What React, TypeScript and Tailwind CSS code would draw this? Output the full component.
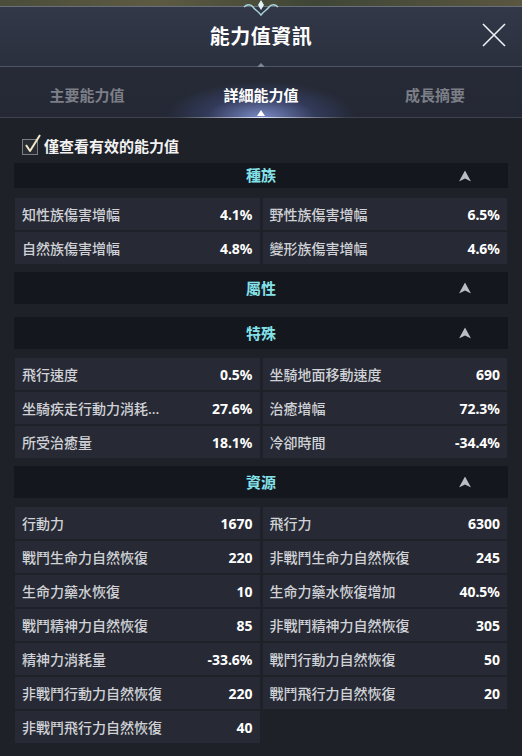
type Cell = { label: string; value: string };

// Stat sections shown in the detail tab
const sections: { title: string; bar: string; cells: Cell[] }[] = [
  {
    title: "種族",
    bar: "h-[25px]",
    cells: [
      { label: "知性族傷害增幅", value: "4.1%" },
      { label: "野性族傷害增幅", value: "6.5%" },
      { label: "自然族傷害增幅", value: "4.8%" },
      { label: "變形族傷害增幅", value: "4.6%" },
    ],
  },
  { title: "屬性", bar: "h-[32px]", cells: [] },
  {
    title: "特殊",
    bar: "h-[32px]",
    cells: [
      { label: "飛行速度", value: "0.5%" },
      { label: "坐騎地面移動速度", value: "690" },
      { label: "坐騎疾走行動力消耗...", value: "27.6%" },
      { label: "治癒增幅", value: "72.3%" },
      { label: "所受治癒量", value: "18.1%" },
      { label: "冷卻時間", value: "-34.4%" },
    ],
  },
  {
    title: "資源",
    bar: "h-[32px]",
    cells: [
      { label: "行動力", value: "1670" },
      { label: "飛行力", value: "6300" },
      { label: "戰鬥生命力自然恢復", value: "220" },
      { label: "非戰鬥生命力自然恢復", value: "245" },
      { label: "生命力藥水恢復", value: "10" },
      { label: "生命力藥水恢復增加", value: "40.5%" },
      { label: "戰鬥精神力自然恢復", value: "85" },
      { label: "非戰鬥精神力自然恢復", value: "305" },
      { label: "精神力消耗量", value: "-33.6%" },
      { label: "戰鬥行動力自然恢復", value: "50" },
      { label: "非戰鬥行動力自然恢復", value: "220" },
      { label: "戰鬥飛行力自然恢復", value: "20" },
      { label: "非戰鬥飛行力自然恢復", value: "40" },
    ],
  },
];

const tabs = ["主要能力值", "詳細能力值", "成長摘要"];

function UpArrow() {
  return (
    <svg width="12" height="11" viewBox="0 0 12 11">
      <path d="M6 0 L12 11 L6 8 L0 11 Z" fill="#b9bdc6" />
    </svg>
  );
}

export default function App() {
  return (
    <div
      className="h-[756px] w-[522px] overflow-hidden bg-[#1f2129] flex flex-col"
      style={{ fontFamily: '"Noto Sans", "Noto Sans CJK TC", sans-serif' }}
    >
      {/* backdrop strip + top ornament */}
      <div className="relative h-[6px] shrink-0 bg-[linear-gradient(90deg,#4a4d3a,#5d5a42_30%,#3f4636_60%,#5a5640)]">
        <svg
          className="absolute left-1/2 -translate-x-1/2 top-0 z-10"
          width="36"
          height="16"
          viewBox="0 0 36 16"
        >
          <path
            d="M1 7 C4 4 8 4 10 7 C12 10 15 11 18 15 C21 11 24 10 26 7 C28 4 32 4 35 7"
            fill="none"
            stroke="#a9d6dc"
            strokeWidth="1.4"
          />
          <path d="M18 0 L21 5 L18 10 L15 5 Z" fill="#dff4f6" />
        </svg>
      </div>
      <div className="h-px shrink-0 bg-[#6a6f7c]" />

      {/* title bar */}
      <div className="relative h-[59px] shrink-0 flex items-center justify-center bg-[linear-gradient(180deg,#323848,#2b303e)]">
        <span className="text-[20px] font-bold text-white tracking-[0.5px]">能力值資訊</span>
        <svg
          className="absolute right-[16px] top-[16px]"
          width="24"
          height="24"
          viewBox="0 0 24 24"
        >
          <path d="M1 1 L23 23 M23 1 L1 23" stroke="#eef0f4" strokeWidth="1.6" />
        </svg>
      </div>

      {/* divider with diamond */}
      <div className="relative h-px shrink-0 bg-[#4e5464]">
        <div className="absolute left-1/2 top-[-2px] -translate-x-1/2 w-[5px] h-[5px] rotate-45 bg-[#7d8494]" />
      </div>

      {/* tabs */}
      <div className="relative h-[50px] shrink-0 grid grid-cols-3 bg-[linear-gradient(180deg,#272b37,#242834)]">
        <div className="absolute left-[165px] right-[165px] bottom-0 h-[36px] bg-[radial-gradient(ellipse_at_50%_100%,rgba(150,170,245,0.75),rgba(90,110,200,0.25)_40%,transparent_70%)]" />
        {tabs.map((t, i) => (
          <div
            key={t}
            className={`relative flex items-center justify-center pt-[6px] text-[15px] font-bold ${
              i === 1 ? "text-white" : "text-[#7c7f87]"
            }`}
          >
            {t}
          </div>
        ))}
        <div className="absolute left-1/2 -translate-x-1/2 bottom-px w-0 h-0 border-l-[4px] border-r-[4px] border-b-[6px] border-l-transparent border-r-transparent border-b-white" />
      </div>
      <div className="h-px shrink-0 bg-[linear-gradient(90deg,#3d424e,#3d424e_34%,#e4eaff_50%,#3d424e_66%,#3d424e)]" />

      {/* content */}
      <div className="flex flex-col px-[14px]">
        <div className="h-[45px] flex items-center pl-[8px] pt-[12px]">
          <div className="relative w-[16px] h-[16px] border-[1.5px] border-[#7a7d84] bg-[#2a2c33]">
            <svg
              className="absolute left-[1px] top-[-6px]"
              width="18"
              height="20"
              viewBox="0 0 18 20"
            >
              <path
                d="M2 11 L6 17 L16 1"
                fill="none"
                stroke="#f1e9cc"
                strokeWidth="2"
                strokeLinejoin="round"
              />
            </svg>
          </div>
          <span className="ml-[6px] text-[15px] font-bold text-[#f2f2f2]">僅查看有效的能力值</span>
        </div>

        {sections.map((s, si) => (
          <div
            key={s.title}
            className={si === 0 ? "" : s.title === "特殊" ? "mt-[13px]" : "mt-[8px]"}
          >
            <div className={`relative ${s.bar} flex items-center justify-center bg-[#15171e]`}>
              <span className="text-[15px] font-bold text-[#84e2ea]">{s.title}</span>
              <div className="absolute right-[37px] top-1/2 -translate-y-1/2 flex">
                <UpArrow />
              </div>
            </div>
            {s.cells.length > 0 && (
              <div
                className={`grid grid-cols-2 gap-x-[3px] gap-y-[2px] mx-px ${
                  si === 0 ? "mt-[10px]" : "mt-[9px]"
                }`}
              >
                {s.cells.map((c) => (
                  <div
                    key={c.label}
                    className="h-[32px] flex items-center justify-between px-[7px] bg-[#272a34]"
                  >
                    <span className="text-[14px] font-medium text-[#d0d2d7] whitespace-nowrap">
                      {c.label}
                    </span>
                    <span className="text-[14px] font-bold text-white">{c.value}</span>
                  </div>
                ))}
              </div>
            )}
          </div>
        ))}
      </div>
    </div>
  );
}
